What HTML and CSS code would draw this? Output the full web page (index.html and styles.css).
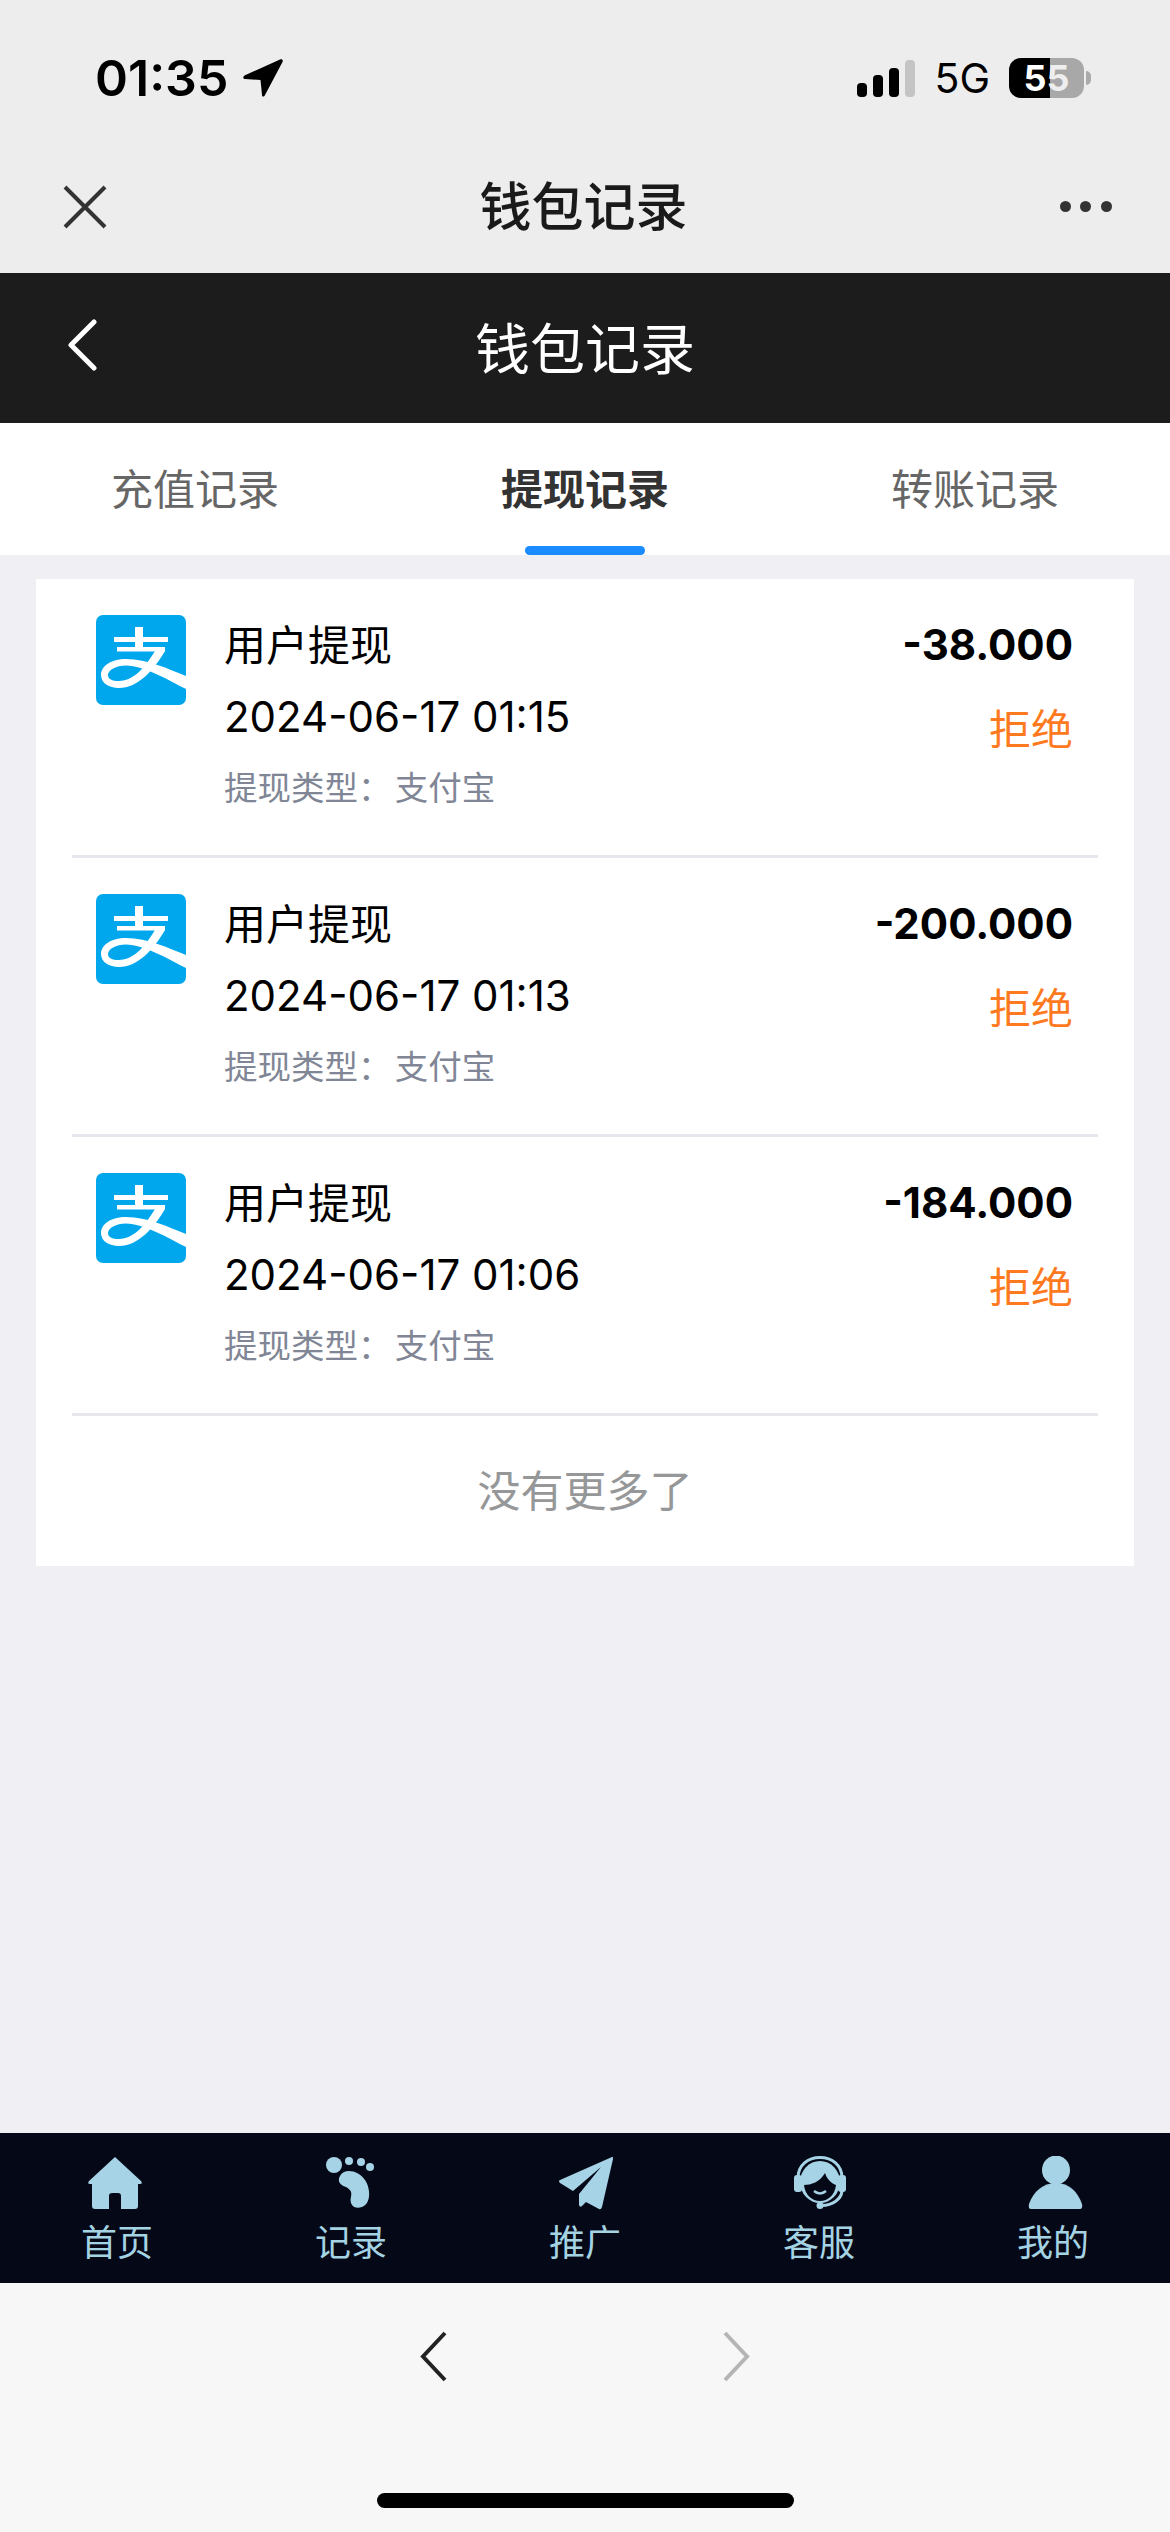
FILE: index.html
```html
<!DOCTYPE html>
<html lang="zh-CN">
<head>
    <meta charset="UTF-8">
    <title>钱包记录</title>
    <link rel="stylesheet" href="styles.css">
</head>
<body>
<div class="top">
    <div class="status">
        <div class="time">
            <span>01:35</span>
            <svg class="loc" viewBox="0 0 40 38"><path d="M37 .5C39-.2 40.300 1 39.500 3L22 36C21 38 19 38 19 36L17.500 21 2 20C0 20-.5 17.500 2 16.300Z"/></svg>
        </div>
        <div class="indicators">
            <div class="signal">
                <span class="bar b1"></span>
                <span class="bar b2"></span>
                <span class="bar b3"></span>
                <span class="bar b4"></span>
            </div>
            <span class="net">5G</span>
            <div class="battery"><span class="level">5<span class="level-off">5</span></span></div>
        </div>
    </div>
    <div class="browser-nav">
        <svg class="close" viewBox="0 0 44 44"><path d="M2 2L42 42M42 2L2 42"/></svg>
        <h1 class="browser-title">钱包记录</h1>
        <div class="dots"><i></i><i></i><i></i></div>
    </div>
</div>

<header class="head">
    <svg class="back" viewBox="0 0 32 52"><path d="M28 3L5 26 28 49"/></svg>
    <h2 class="head-title">钱包记录</h2>
    <span></span>
</header>

<nav class="tabs">
    <a class="tab">充值记录</a>
    <a class="tab active">提现记录</a>
    <a class="tab">转账记录</a>
</nav>

<main class="main">
    <section class="card">
        <div class="row">
            <svg class="alipay" viewBox="0 0 90 90"><rect width="90" height="90" rx="7" fill="#00a7ec"/><path fill="#fff" d="M39 12h8v10h25v5H47v5h22v4.500H21V32h18v-5H18v-5h21z"/><path fill="#fff" d="M90 61C72 54 52 44 30 44 15 44 5 51 5 60 5 68 13 73 23 73 42 73 58 55 69 36H59C50 51 38 66 23 66 16 66 12 64 12 60 12 55 20 50.500 30 50.500 48 50.500 72 65 90 74Z"/></svg>
            <div class="info">
                <p class="title">用户提现</p>
                <p class="date">2024-06-17 01:15</p>
                <p class="type">提现类型： 支付宝</p>
            </div>
            <div class="result">
                <p class="amount">-38.000</p>
                <p class="state">拒绝</p>
            </div>
        </div>
        <div class="row">
            <svg class="alipay" viewBox="0 0 90 90"><rect width="90" height="90" rx="7" fill="#00a7ec"/><path fill="#fff" d="M39 12h8v10h25v5H47v5h22v4.500H21V32h18v-5H18v-5h21z"/><path fill="#fff" d="M90 61C72 54 52 44 30 44 15 44 5 51 5 60 5 68 13 73 23 73 42 73 58 55 69 36H59C50 51 38 66 23 66 16 66 12 64 12 60 12 55 20 50.500 30 50.500 48 50.500 72 65 90 74Z"/></svg>
            <div class="info">
                <p class="title">用户提现</p>
                <p class="date">2024-06-17 01:13</p>
                <p class="type">提现类型： 支付宝</p>
            </div>
            <div class="result">
                <p class="amount">-200.000</p>
                <p class="state">拒绝</p>
            </div>
        </div>
        <div class="row">
            <svg class="alipay" viewBox="0 0 90 90"><rect width="90" height="90" rx="7" fill="#00a7ec"/><path fill="#fff" d="M39 12h8v10h25v5H47v5h22v4.500H21V32h18v-5H18v-5h21z"/><path fill="#fff" d="M90 61C72 54 52 44 30 44 15 44 5 51 5 60 5 68 13 73 23 73 42 73 58 55 69 36H59C50 51 38 66 23 66 16 66 12 64 12 60 12 55 20 50.500 30 50.500 48 50.500 72 65 90 74Z"/></svg>
            <div class="info">
                <p class="title">用户提现</p>
                <p class="date">2024-06-17 01:06</p>
                <p class="type">提现类型： 支付宝</p>
            </div>
            <div class="result">
                <p class="amount">-184.000</p>
                <p class="state">拒绝</p>
            </div>
        </div>
        <div class="nomore">没有更多了</div>
    </section>
</main>

<footer class="tabbar">
    <a class="item">
        <svg class="icon" viewBox="0 0 60 54"><path d="M28 1L54 25Q56 28 53 28H51V50Q51 53 48 53H34V40Q34 37 31 37H25Q22 37 22 40V53H8Q5 53 5 50V28H3Q0 28 2 25Z"/></svg>
        <span>首页</span>
    </a>
    <a class="item">
        <svg class="icon" viewBox="-3 0 60 54"><circle cx="10" cy="9" r="8"/><circle cx="25" cy="5" r="4"/><circle cx="37" cy="6" r="4"/><circle cx="46" cy="11" r="4"/><path d="M16 20C20 12 34 14 41 24 47 33 47 48 38 51 30 54 25 48 27 41 28 36 27 34 22 31 16 29 13 25 16 20Z"/></svg>
        <span>记录</span>
    </a>
    <a class="item">
        <svg class="icon" viewBox="0 0 60 54"><path d="M57 1L5 24Q3 25 5 27L18 35 46 11 24 38V49Q25 52 27 50L31 46 44 53Q46 54 47 51L58 3Q58 0 57 1Z"/></svg>
        <span>推广</span>
    </a>
    <a class="item">
        <svg class="icon" viewBox="0 0 60 54">
            <path class="line" d="M9 22C9 9 19 1.500 31 1.500S53 9 53 22"/>
            <rect x="5" y="19" width="8" height="17" rx="3"/>
            <rect x="49" y="19" width="8" height="17" rx="3"/>
            <ellipse cx="31" cy="26" rx="20" ry="21"/>
            <path class="face" d="M15 29C22 29 31 26 36 17 38 23 42 27 47 29 46 39 39 45 31 45 23 45 16 39 15 29Z"/>
            <path class="smile" d="M25 35Q31 40 37 35"/>
            <path class="line" d="M53 35C52 44 43 49 33 49.500"/>
            <circle cx="31" cy="49.500" r="3.500"/>
        </svg>
        <span>客服</span>
    </a>
    <a class="item">
        <svg class="icon" viewBox="0 0 60 54"><ellipse cx="33" cy="14" rx="14" ry="14.500"/><path d="M8 53Q5 53 6 48C10 36 20 27 33 27 46 27 55 36 59 48 60 53 57 53 57 53Z"/></svg>
        <span>我的</span>
    </a>
</footer>

<div class="bottom">
    <div class="arrows">
        <svg class="arrow" viewBox="0 0 27 51"><path d="M25 2L3 25.500 25 49"/></svg>
        <svg class="arrow off" viewBox="0 0 27 51"><path d="M2 2L24 25.500 2 49"/></svg>
    </div>
    <div class="home-bar"></div>
</div>
</body>
</html>
```

FILE: styles.css
```css
*{
    margin: 0;
    padding: 0;
    box-sizing: border-box;
    list-style: none;
}
html,body{
    height: 100%;
}
body{
    width: 1170px;
    height: 2532px;
    display: flex;
    flex-direction: column;
    overflow: hidden;
    background: #efeff4;
    font-family: "Liberation Sans", "Noto Sans CJK SC", sans-serif;
}

/* status bar + webview nav */
.top{
    height: 273px;
    background: #ededed;
}
.status{
    height: 140px;
    padding: 16px 79px 0 95px;
    display: flex;
    justify-content: space-between;
    align-items: center;
    color: #000;
}
.time{
    display: flex;
    align-items: center;
    gap: 15px;
    font-family: Inter, sans-serif;
    font-size: 50px;
    font-weight: 600;
}
.loc{
    width: 40px;
    height: 38px;
}
.indicators{
    display: flex;
    align-items: center;
}
.signal{
    display: flex;
    align-items: flex-end;
    gap: 6px;
    height: 37px;
    margin-right: 19px;
}
.bar{
    width: 10px;
    border-radius: 4px;
    background: #000;
}
.b1{ height: 14px; }
.b2{ height: 22px; }
.b3{ height: 29px; }
.b4{ height: 37px; background: #c4c4c4; }
.net{
    font-family: Inter, sans-serif;
    font-size: 41px;
    margin-right: 19px;
}
.battery{
    width: 75px;
    height: 40px;
    border-radius: 12px;
    background: linear-gradient(90deg, #000 41px, #a8a8a8 41px);
    display: flex;
    align-items: center;
    justify-content: center;
    position: relative;
    margin-right: 7px;
    color: #fff;
    font-family: Inter, sans-serif;
    font-size: 36px;
    font-weight: 700;
}
.battery::after{
    content: "";
    position: absolute;
    right: -7px;
    top: 13px;
    width: 5px;
    height: 14px;
    border-radius: 0 5px 5px 0;
    background: #aaa;
}
.level-off{
    color: #eee;
}
.browser-nav{
    height: 133px;
    padding: 0 58px 0 63px;
    display: flex;
    justify-content: space-between;
    align-items: center;
}
.close{
    width: 44px;
    height: 44px;
    fill: none;
    stroke: #333;
    stroke-width: 4;
}
.browser-title{
    font-size: 52px;
    font-weight: 500;
    color: #1a1a1a;
    padding-bottom: 6px;
}
.dots{
    width: 52px;
    display: flex;
    justify-content: space-between;
}
.dots i{
    width: 11px;
    height: 11px;
    border-radius: 50%;
    background: #333;
}

/* black header */
.head{
    height: 150px;
    background: #1c1c1c;
    padding: 0 0 0 66px;
    display: grid;
    grid-template-columns: 1fr auto 1fr;
    align-items: center;
}
.back{
    width: 32px;
    height: 52px;
    margin-bottom: 7px;
    fill: none;
    stroke: #fff;
    stroke-width: 5;
    stroke-linecap: round;
    stroke-linejoin: round;
}
.head-title{
    font-size: 55px;
    font-weight: 400;
    color: #fff;
    margin-left: -66px;
    padding-bottom: 6px;
}

/* tabs */
.tabs{
    height: 132px;
    background: #fff;
    display: flex;
}
.tab{
    flex: 1;
    display: flex;
    align-items: center;
    justify-content: center;
    position: relative;
    padding-bottom: 6px;
    font-size: 42px;
    color: #666;
}
.tab.active{
    font-weight: 700;
    color: #333;
}
.tab.active::after{
    content: "";
    position: absolute;
    left: 135px;
    bottom: 0;
    width: 120px;
    height: 9px;
    border-radius: 5px;
    background: #1a8cff;
}

/* list */
.main{
    flex: 1;
    padding: 24px 36px 0;
}
.card{
    background: #fff;
}
.row{
    height: 279px;
    margin: 0 36px;
    padding: 30px 25px 0 24px;
    border-bottom: 3px solid #e6e6ec;
    display: flex;
}
.alipay{
    width: 90px;
    height: 90px;
    margin: 6px 38px 0 0;
    flex-shrink: 0;
}
.info{
    flex: 1;
}
.title,.date{
    font-size: 42px;
    line-height: 72px;
    color: #000;
}
.title{
    padding-top: 2px;
    height: 72px;
}
.date{
    font-family: Inter, sans-serif;
}
.type{
    font-size: 33.500px;
    line-height: 72px;
    word-spacing: -6px;
    color: #808695;
}
.result{
    text-align: right;
}
.amount{
    font-family: Inter, sans-serif;
    font-size: 42px;
    font-weight: 700;
    line-height: 72px;
    color: #000;
}
.state{
    font-size: 42px;
    line-height: 72px;
    margin-top: 14px;
    color: #ff7a1f;
}
.nomore{
    height: 150px;
    padding-bottom: 6px;
    display: flex;
    align-items: center;
    justify-content: center;
    font-size: 43px;
    color: #969799;
}

/* app tabbar */
.tabbar{
    height: 150px;
    background: #050816;
    display: flex;
}
.item{
    flex: 1;
    padding-top: 23px;
    display: flex;
    flex-direction: column;
    align-items: center;
    gap: 10px;
    font-size: 36px;
    line-height: 48px;
    color: #a4d3e4;
}
.icon{
    width: 60px;
    height: 54px;
    fill: #a6d3e6;
}
.icon .line{
    fill: none;
    stroke: #a6d3e6;
    stroke-width: 3;
}
.icon .face{
    fill: #050816;
}
.icon .smile{
    fill: none;
    stroke: #a6d3e6;
    stroke-width: 2.500;
}

/* safari bottom */
.bottom{
    height: 249px;
    background: #f7f7f7;
    padding-top: 48px;
    display: flex;
    flex-direction: column;
    align-items: center;
}
.arrows{
    display: flex;
    gap: 276px;
}
.arrow{
    width: 27px;
    height: 51px;
    fill: none;
    stroke: #222;
    stroke-width: 4;
}
.arrow.off{
    stroke: #b5b5b5;
}
.home-bar{
    width: 417px;
    height: 15px;
    margin-top: 111px;
    border-radius: 8px;
    background: #000;
}
```
